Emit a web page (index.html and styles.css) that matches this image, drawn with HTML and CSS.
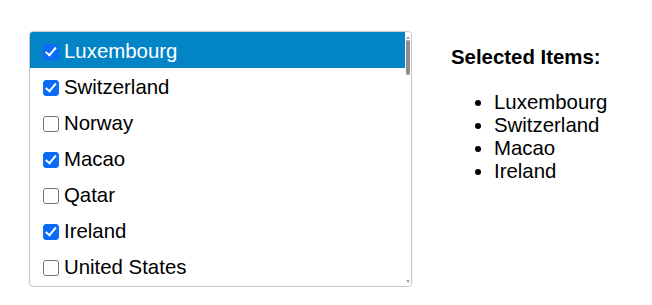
FILE: index.html
```html
<!DOCTYPE html>
<html lang="en">
<head>
<meta charset="utf-8">
<title>Country picker</title>
<link rel="stylesheet" href="styles.css">
</head>
<body>
<main class="page">
  <div class="listbox-frame">
    <div class="listbox" role="listbox" aria-multiselectable="true">
      <label class="option active"><input type="checkbox" checked><span>Luxembourg</span></label>
      <label class="option"><input type="checkbox" checked><span>Switzerland</span></label>
      <label class="option"><input type="checkbox"><span>Norway</span></label>
      <label class="option"><input type="checkbox" checked><span>Macao</span></label>
      <label class="option"><input type="checkbox"><span>Qatar</span></label>
      <label class="option"><input type="checkbox" checked><span>Ireland</span></label>
      <label class="option"><input type="checkbox"><span>United States</span></label>
      <label class="option"><input type="checkbox"><span>Singapore</span></label>
      <label class="option"><input type="checkbox"><span>Iceland</span></label>
      <label class="option"><input type="checkbox"><span>Denmark</span></label>
      <label class="option"><input type="checkbox"><span>Australia</span></label>
      <label class="option"><input type="checkbox"><span>Netherlands</span></label>
      <label class="option"><input type="checkbox"><span>Sweden</span></label>
      <label class="option"><input type="checkbox"><span>Austria</span></label>
      <label class="option"><input type="checkbox"><span>Finland</span></label>
    </div>
    <div class="scrollbar" aria-hidden="true">
      <span class="arrow arrow-up"></span>
      <span class="track"><span class="thumb"></span></span>
      <span class="arrow arrow-down"></span>
    </div>
  </div>
  <section class="selected">
    <h3 class="selected-title">Selected Items:</h3>
    <ul class="selected-list">
      <li>Luxembourg</li>
      <li>Switzerland</li>
      <li>Macao</li>
      <li>Ireland</li>
    </ul>
  </section>
</main>
</body>
</html>
```
FILE: styles.css
```css
html, body {
  margin: 0;
  padding: 0;
  background: #ffffff;
}

body {
  font-family: "Liberation Sans", Arial, sans-serif;
  font-size: 20.4px;
  color: #000000;
}

.page {
  display: flex;
  align-items: flex-start;
  gap: 39px;
  padding: 31px 0 0 29px;
}

.listbox-frame {
  box-sizing: border-box;
  display: flex;
  width: 383px;
  height: 256px;
  border: 1px solid #c8c8c8;
  border-radius: 4px;
  overflow: hidden;
  background: #ffffff;
  box-shadow: 0 1px 2px rgba(0, 0, 0, 0.08);
}

.listbox {
  flex: 1;
  min-width: 0;
  overflow: hidden;
}

.scrollbar {
  flex: none;
  width: 6px;
  display: flex;
  flex-direction: column;
  align-items: center;
  padding: 4px 0 3px;
  background: #ffffff;
}

.arrow {
  flex: none;
  width: 0;
  height: 0;
  border-left: 2px solid transparent;
  border-right: 2px solid transparent;
}

.arrow-up {
  border-bottom: 3px solid #a6a6a6;
}

.arrow-down {
  border-top: 3px solid #a6a6a6;
}

.track {
  flex: 1;
  display: flex;
  flex-direction: column;
  padding: 1px 0;
}

.thumb {
  display: block;
  width: 4px;
  height: 35px;
  border-radius: 2px;
  background: #8d8d8d;
}

.option {
  display: flex;
  align-items: center;
  gap: 5px;
  height: 36px;
  box-sizing: border-box;
  padding: 8px 0 5px 13px;
  line-height: 23px;
  white-space: nowrap;
  cursor: pointer;
}

.option input {
  -webkit-appearance: none;
  appearance: none;
  position: relative;
  box-sizing: border-box;
  width: 16px;
  height: 16px;
  min-width: 16px;
  margin: 0;
  flex: 0 0 16px;
  border: 1.5px solid #767676;
  border-radius: 3px;
  background: #ffffff;
}

.option input:checked {
  border-color: #0b6cf5;
  background: #0b6cf5;
}

.option input:checked::after {
  content: "";
  position: absolute;
  left: 4px;
  top: 0.5px;
  width: 4px;
  height: 8.5px;
  border-right: 2.6px solid #ffffff;
  border-bottom: 2.6px solid #ffffff;
  transform: rotate(40deg);
}

.option.active {
  background: #0284c7;
  color: #ffffff;
}

.selected {
  display: flex;
  flex-direction: column;
}

.selected-title {
  margin: 15px 0 0;
  font-size: 20.4px;
  font-weight: bold;
  line-height: 23px;
}

.selected-list {
  margin: 22px 0 0;
  padding-left: 43px;
  line-height: 23px;
}
```
